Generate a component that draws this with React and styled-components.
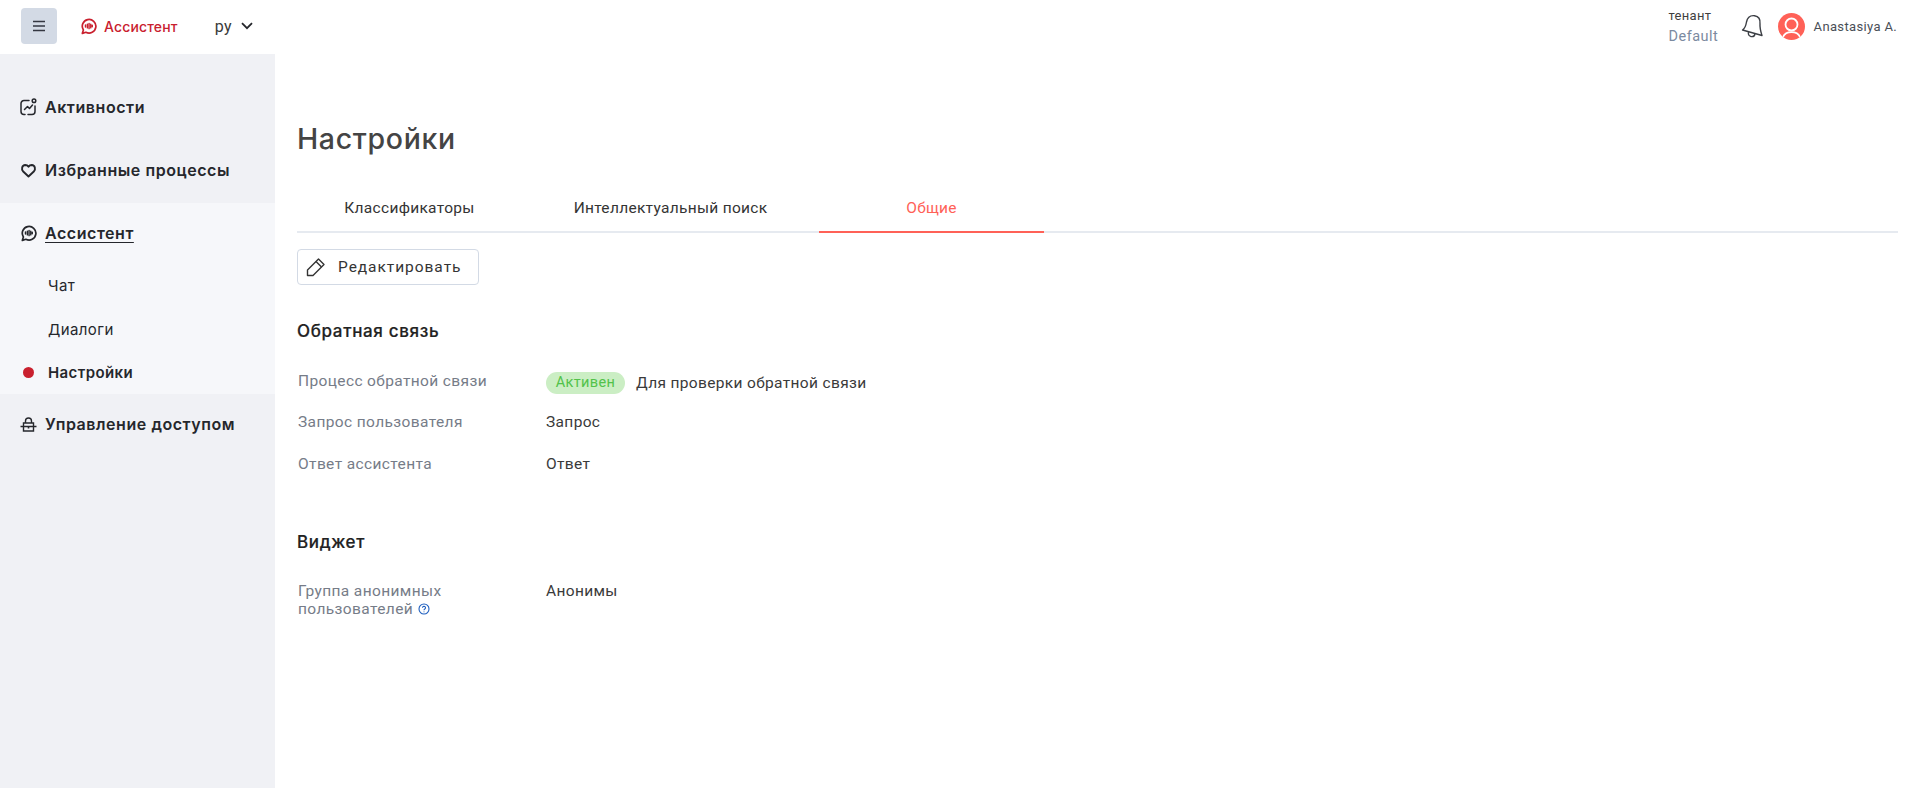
import React from "react";
import styled, { createGlobalStyle } from "styled-components";

const Global = createGlobalStyle`
  html, body { margin: 0; padding: 0; background: #fff; }
  body { font-family: Roboto, "Liberation Sans", sans-serif; color: #3d3d3d; }
  * { box-sizing: border-box; }
`;
const Page = styled.div`display: flex; flex-direction: column; height: 788px; overflow: hidden;`;
const Header = styled.header`height: 54px; flex: none; display: flex; align-items: center; padding: 0 22px 2px 21px;`;
const Burger = styled.button`width: 36px; height: 36px; border: 0; border-radius: 4px; background: #d3dae5; display: flex; align-items: center; justify-content: center; padding: 0; color: #343741;`;
const Brand = styled.div`display: flex; align-items: center; gap: 7px; margin-left: 23px; color: #c9202e; font: 500 14px Inter, sans-serif; letter-spacing: .15px;`;
const Lang = styled.div`display: flex; align-items: center; gap: 9px; margin-left: 37px; font-size: 16px; color: #3a3a3a; letter-spacing: .4px;`;
const HeaderRight = styled.div`margin-left: auto; display: flex; align-items: center;`;
const Tenant = styled.div`display: flex; flex-direction: column; gap: 5px; line-height: 16px; width: 72px; color: #3f3f3f; font-size: 13px; letter-spacing: .3px;`;
const TenantValue = styled.span`color: #7b8aa0; font-size: 14.5px; letter-spacing: .45px;`;
const Avatar = styled.div`width: 27px; height: 27px; border-radius: 50%; background: #ff6157; margin-left: 14px; overflow: hidden;`;
const UserName = styled.span`margin-left: 9px; font-size: 13px; color: #4a4f57; letter-spacing: .35px;`;
const Body = styled.div`flex: 1; display: flex; min-height: 0;`;
const Sidebar = styled.aside`width: 275px; flex: none; background: #f0f1f5; padding-top: 23px;`;
const NavItem = styled.div`height: 63px; display: flex; align-items: center; gap: 8px; padding: 0 0 3px 20px; font: 600 16px Inter, sans-serif; color: #25272c; letter-spacing: .55px;`;
const NavLabel = styled.span`text-decoration: ${p => p.$underline ? "underline" : "none"}; text-underline-offset: 3px; text-decoration-thickness: 1px;`;
const NavGroup = styled.div`background: #f6f7fa; height: 191px;`;
const SubItem = styled.div`height: 43.5px; display: flex; align-items: center; padding: 0 0 4px 48px; position: relative; font: ${p => p.$active ? 600 : 400} 15px Inter, sans-serif; color: #25272c; letter-spacing: .4px;`;
const Dot = styled.span`position: absolute; left: 23px; top: 50%; width: 11px; height: 11px; margin-top: -7.5px; border-radius: 50%; background: #c9202e;`;
const Main = styled.main`flex: 1; padding: 0 21px 0 22px; min-width: 0;`;
const Title = styled.h1`margin: 66px 0 0; height: 38px; font: 500 28.5px/38px Inter, sans-serif; color: #444; letter-spacing: .65px;`;
const Tabs = styled.div`display: flex; gap: 36px; margin-top: 36px; height: 39px; border-bottom: 2px solid #e6eaf0;`;
const Tab = styled.div`width: 225px; height: 39px; display: flex; align-items: center; justify-content: center; font-size: 15.5px; letter-spacing: .3px; padding-bottom: 9px; color: ${p => p.$active ? "#ff6157" : "#343434"}; border-bottom: 2px solid ${p => p.$active ? "#ff6157" : "transparent"};`;
const EditButton = styled.button`margin-top: 16px; width: 182px; height: 36px; border: 1px solid #d3dae5; border-radius: 4px; background: #fff; display: flex; align-items: center; gap: 12px; padding: 0 0 0 8px; font: 400 15.5px Roboto, sans-serif; color: #343434; letter-spacing: .95px;`;
const SectionTitle = styled.h2`margin: ${p => p.$top}px 0 0; font: 500 17px/22px Inter, sans-serif; color: #222; letter-spacing: .65px; -webkit-text-stroke: .2px #222;`;
const Rows = styled.div`margin-top: ${p => p.$top}px; display: flex; flex-direction: column;`;
const Row = styled.div`display: grid; grid-template-columns: 249px 1fr; height: ${p => p.$h}px; align-items: ${p => p.$start ? "start" : "center"};`;
const Label = styled.div`padding-left: 1px; font-size: 15.5px; line-height: 18px; color: #767c88; letter-spacing: .38px;`;
const Value = styled.div`display: flex; align-items: center; gap: 11px; padding-top: ${p => p.$drop || 0}px; font-size: 15.5px; line-height: 18px; color: #3a3a3a; letter-spacing: .35px;`;
const Badge = styled.span`height: 22px; width: 79px; border-radius: 11px; background: #cbeec4; color: #52c24a; font-size: 14.5px; display: flex; align-items: center; justify-content: center;`;
const Help = styled.svg`vertical-align: -1px; margin-left: 5px;`;

const ChatIcon = ({ color = "currentColor" }) => (
  <svg width="17" height="18" viewBox="0 0 18 18" fill="none" stroke={color} strokeWidth="1.8">
    <path d="M2.5 16.8 L3.6 13.2 A7.2 7.2 0 1 1 6.2 15.6 Z" strokeLinejoin="round" />
    <path d="M5.8 8v2M7.8 7v4M9.6 6.2v5.6M11.4 7v4M13 8.2v1.6" strokeWidth="1.5" strokeLinecap="round" />
  </svg>
);

export default function App() {
  return (
    <Page>
      <Global />
      <Header>
        <Burger>
          <svg width="14" height="12" viewBox="0 0 14 12" stroke="currentColor" strokeWidth="1.6"><path d="M1 1.5h12M1 6h12M1 10.5h12" /></svg>
        </Burger>
        <Brand><ChatIcon />Ассистент</Brand>
        <Lang>ру
          <svg width="12" height="8" viewBox="0 0 12 8" fill="none" stroke="#25272c" strokeWidth="1.8"><path d="M1 1.2 6 6.2l5-5" /></svg>
        </Lang>
        <HeaderRight>
          <Tenant>тенант<TenantValue>Default</TenantValue></Tenant>
          <svg width="23" height="26" viewBox="0 0 23 26" fill="none" stroke="#3c3f45" strokeWidth="1.4" strokeLinejoin="round">
            <path d="M1.5 17C4.5 15 5 12 5.5 9 6.5 4 10 2.3 13.5 2.7 17.5 3.3 19.5 6.5 19 11 18.7 15 19.5 18 21 22.5Z" />
            <path d="M7.5 19c-.5 2.5.5 4 2.5 4.5 1.8.4 3.5-.5 4-2.5" />
          </svg>
          <Avatar>
            <svg width="27" height="27" viewBox="0 0 27 27" fill="none" stroke="#fff" strokeWidth="1.8">
              <circle cx="13.5" cy="11.5" r="6" /><path d="M5 24c1.5-3.5 4.5-4.8 8.5-4.8s7 1.3 8.5 4.8" />
            </svg>
          </Avatar>
          <UserName>Anastasiya A.</UserName>
        </HeaderRight>
      </Header>
      <Body>
        <Sidebar>
          <NavItem>
            <svg width="17" height="18" viewBox="0 0 17 18" fill="none" stroke="#25272c" strokeWidth="1.5" strokeLinecap="round" strokeLinejoin="round">
              <path d="M9 2.5H4a3 3 0 0 0-3 3v8a3 3 0 0 0 3 3h1M8 16.5h4a3 3 0 0 0 3-3V8" />
              <circle cx="14" cy="2.8" r="1.8" /><path d="M4.5 11.5 7.5 8.5l2 2 3-3.5" />
            </svg>
            <NavLabel>Активности</NavLabel>
          </NavItem>
          <NavItem>
            <svg width="17" height="15" viewBox="0 0 17 15" fill="none" stroke="#25272c" strokeWidth="1.9" strokeLinejoin="round">
              <path d="M8.5 13.5 3.2 8.5C1 6.2 2 2.2 5.2 2 6.7 2 7.8 2.7 8.5 3.8 9.2 2.7 10.3 2 11.8 2 15 2.2 16 6.2 13.8 8.5Z" />
            </svg>
            <NavLabel>Избранные процессы</NavLabel>
          </NavItem>
          <NavGroup>
            <NavItem><ChatIcon color="#25272c" /><NavLabel $underline>Ассистент</NavLabel></NavItem>
            <SubItem>Чат</SubItem>
            <SubItem>Диалоги</SubItem>
            <SubItem $active><Dot />Настройки</SubItem>
          </NavGroup>
          <NavItem>
            <svg width="17" height="15" viewBox="0 0 17 15" fill="none" stroke="#25272c" strokeWidth="1.4">
              <path d="M5.5 6V4a3 3 0 0 1 6 0V6M.5 9.5h16M3.5 6h10v8h-10z" /><path d="M8.5 9.5v2" strokeWidth="1.6" />
            </svg>
            <NavLabel>Управление доступом</NavLabel>
          </NavItem>
        </Sidebar>
        <Main>
          <Title>Настройки</Title>
          <Tabs>
            <Tab>Классификаторы</Tab>
            <Tab>Интеллектуальный поиск</Tab>
            <Tab $active>Общие</Tab>
          </Tabs>
          <EditButton>
            <svg width="20" height="20" viewBox="0 0 20 20" fill="none" stroke="#343434" strokeWidth="1.4" strokeLinejoin="round">
              <path d="M1.5 18.5V13L12.5 2l5.500 5.500L7 18.500Z" /><path d="M10 4.500 15.500 10" />
            </svg>
            Редактировать
          </EditButton>
          <SectionTitle $top={35}>Обратная связь</SectionTitle>
          <Rows $top={17}>
            <Row $h={44}><Label>Процесс обратной связи</Label><Value $drop={4}><Badge>Активен</Badge>Для проверки обратной связи</Value></Row>
            <Row $h={38}><Label>Запрос пользователя</Label><Value>Запрос</Value></Row>
            <Row $h={46}><Label>Ответ ассистента</Label><Value>Ответ</Value></Row>
          </Rows>
          <SectionTitle $top={44}>Виджет</SectionTitle>
          <Rows $top={29}>
            <Row $h={50} $start>
              <Label>Группа анонимных<br />пользователей
                <Help width="12" height="12" viewBox="0 0 12 12" fill="none" stroke="#1f5fbf" strokeWidth="1.1">
                  <circle cx="6" cy="6" r="5" /><path d="M4.5 4.8a1.500 1.400 0 1 1 2.300 1.200c-.6.400-.8.700-.8 1.200M6 8.400v.8" />
                </Help>
              </Label>
              <Value>Анонимы</Value>
            </Row>
          </Rows>
        </Main>
      </Body>
    </Page>
  );
}
